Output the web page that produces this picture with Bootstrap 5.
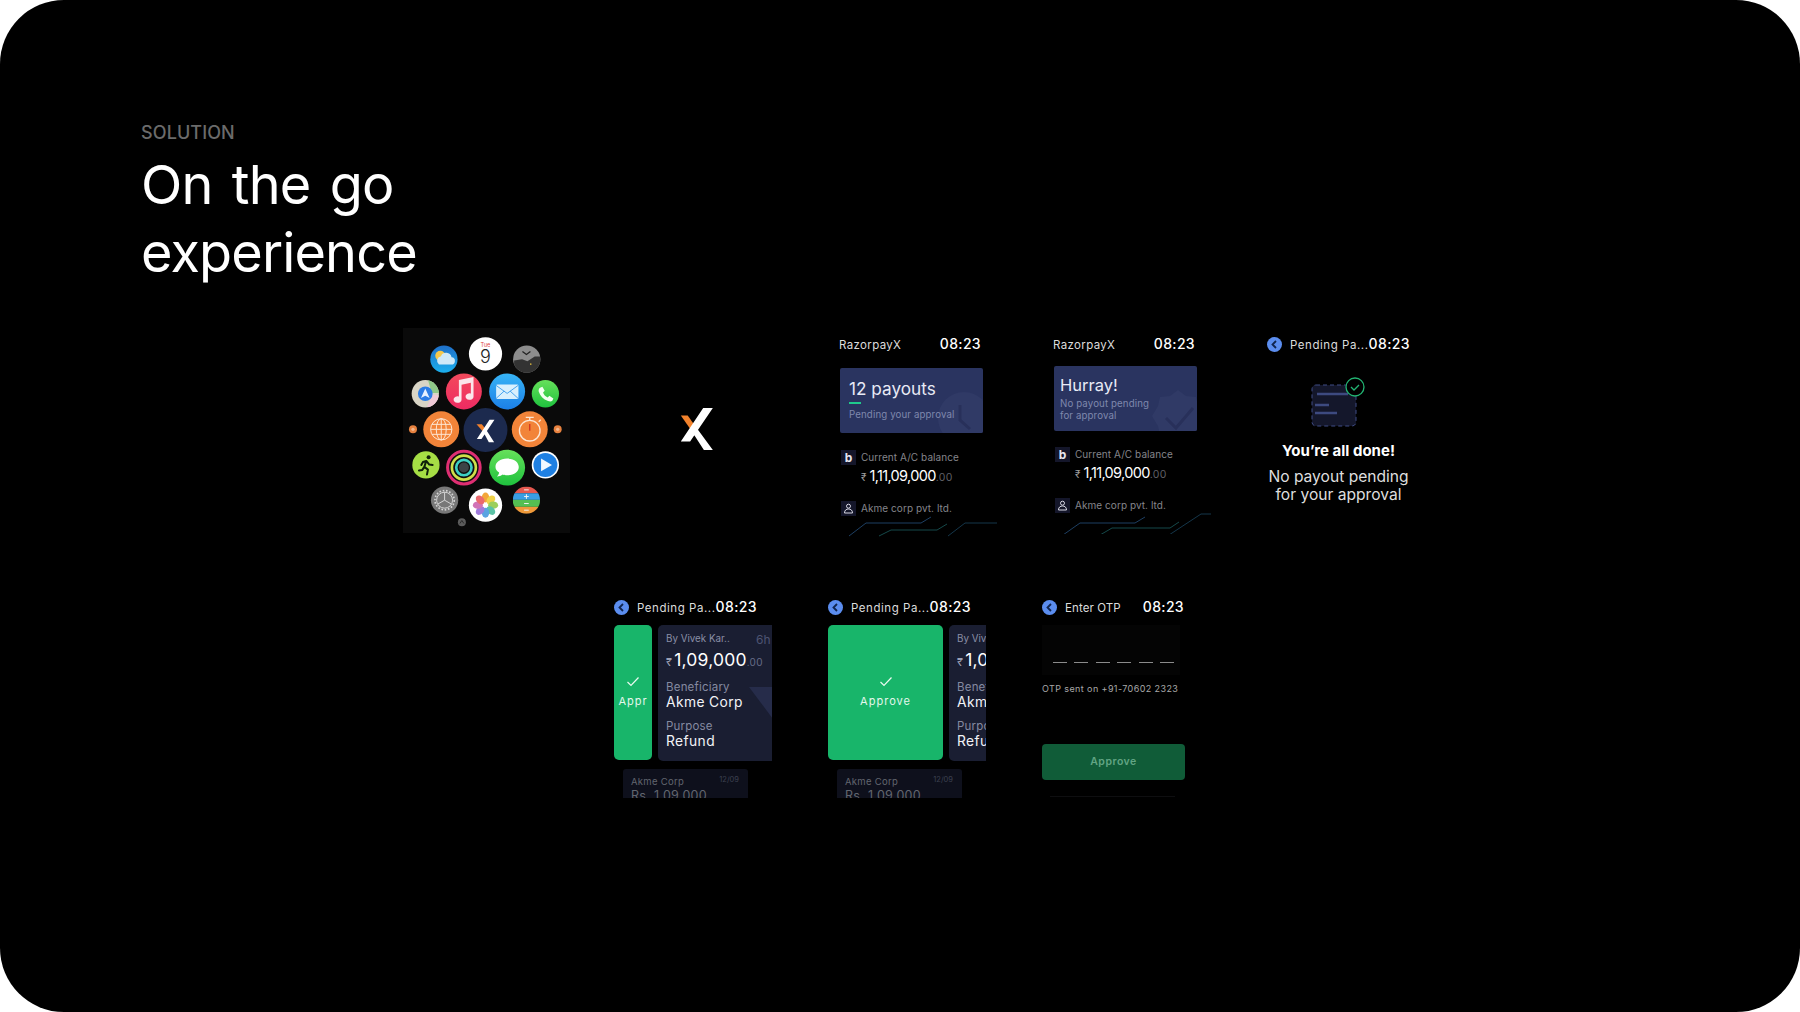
<!DOCTYPE html>
<html lang="en">
  <head>
    <meta charset="utf-8" />
    <title>Solution - On the go experience</title>
    <link href="https://cdn.jsdelivr.net/npm/bootstrap@5.3.0/dist/css/bootstrap.min.css" rel="stylesheet">
    <script src="https://cdn.jsdelivr.net/npm/bootstrap@5.3.0/dist/js/bootstrap.bundle.min.js"></script>
    <meta name="viewport" content="width=device-width, initial-scale=1">
    <style>
      html, body { height: 100%; }
      body { background: #fff; font-family: Inter, "Liberation Sans", sans-serif; overflow: hidden; }
      .slide { width: 1800px; height: 1012px; background: #000; border-radius: 64px; padding: 122px 0 0 141px; overflow: hidden; color: #fff; }

      /* title block */
      .kicker { font-size: 18px; line-height: 22px; color: #6b6b6b; font-weight: 500; letter-spacing: .1px; }
      .headline { font-family: Inter, sans-serif; font-size: 54px; line-height: 68px; font-weight: 400; margin: 7px 0 0; letter-spacing: -.85px; word-spacing: 5px; }

      /* two rows of watch screens */
      .row-one { margin: 41px 0 0 262px; }
      .row-two { margin: 54px 0 0 473px; }
      .apps { width: 167px; height: 205px; background: #0a0a0a; flex: none; }
      .apps svg { display: block; }
      .logo-x { width: 34px; height: 42px; margin: 80px 125px 0 110px; flex: none; }
      .watch { width: 170px; margin-right: 44px; padding-top: 6px; flex: none; }
      .watch-head { width: 142px; height: 20px; }
      .watch-title { font-size: 11.5px; line-height: 16px; letter-spacing: .55px; color: #dcdcdc; white-space: nowrap; margin-top: 2px; }
      .title-brand { letter-spacing: .35px; }
      .title-otp { letter-spacing: .1px; }
      .watch-time { font-size: 14px; line-height: 20px; letter-spacing: .35px; margin-left: auto; font-weight: 500; }
      .back-dot { width: 15px; height: 15px; border-radius: 50%; background: #5b8def; margin-right: 8px; flex: none; }
      .back-dot svg { display: block; }

      /* home screens */
      .hero { width: 143px; height: 65px; margin: 14px 0 0 1px; background: #2a3460; border-radius: 2px; padding: 9px 9px; position: relative; overflow: hidden; }
      .hero-up { margin-top: 12px; padding: 7px 6px; }
      .hero-mark { position: absolute; right: -7px; bottom: -11px; width: 52px; height: 52px; }
      .hero-big { font-size: 17.2px; line-height: 24px; color: #e8eaf5; white-space: nowrap; position: relative; }
      .hero-up .hero-big { font-size: 16.5px; margin-bottom: 1px; }
      .hero-bar { width: 12px; height: 2px; background: #1fc98c; margin: 1px 0 5px; position: relative; }
      .hero-sub { font-size: 9.7px; line-height: 12px; letter-spacing: .12px; color: #7f88ad; position: relative; white-space: nowrap; }
      .info-row { margin: 17px 0 0 2px; height: 15px; font-size: 10px; letter-spacing: .06px; color: #85858b; white-space: nowrap; }
      .hero-up + .info-row { margin-top: 16px; }
      .amount + .info-row { margin-top: 14px; }
      .info-box { width: 15px; height: 15px; background: #14162a; color: #e6e6ee; font-weight: 700; font-size: 12px; margin-right: 5px; flex: none; }
      .amount { margin: 0 0 0 22px; height: 22px; font-size: 14.5px; line-height: 22px; letter-spacing: -.65px; white-space: nowrap; }
      .amount-sym { font-size: 10px; color: #999; margin-right: 3px; letter-spacing: 0; }
      .amount-tail { font-size: 10.5px; color: #5f5f65; letter-spacing: .3px; }
      .trace { display: block; margin: -3px 0 0 0; }

      /* all done */
      .done-pic { display: block; margin: 19px 0 0 34px; }
      .done-title { width: 143px; text-align: center; font-weight: 700; font-size: 15px; line-height: 18px; margin-top: 15px; white-space: nowrap; }
      .done-text { width: 143px; text-align: center; font-size: 15.6px; line-height: 17.5px; color: #dedede; margin-top: 8px; white-space: nowrap; }

      /* swipe to approve */
      .swipe { width: 158px; height: 136px; margin-top: 8px; overflow: hidden; gap: 6px; }
      .swipe-go { background: #18b56a; border-radius: 5px; height: 135px; flex: none; overflow: hidden; font-size: 11px; letter-spacing: 1px; color: #e4f7ec; white-space: nowrap; }
      .swipe-go svg { margin-bottom: 6px; flex: none; }
      .swipe-thin { width: 38px; }
      .swipe-wide { width: 115px; }
      .pay-card { width: 150px; height: 136px; flex: none; background: #1a1e32; border-radius: 5px; padding: 7px 8px; position: relative; }
      .pay-top { height: 14px; font-size: 9.8px; color: #8a8fa6; white-space: nowrap; }
      .pay-age { position: absolute; left: 98px; top: 6px; font-size: 12px; color: #4e5472; }
      .pay-amount { font-size: 17.5px; line-height: 22px; margin-top: 3px; letter-spacing: .2px; white-space: nowrap; }
      .pay-sym { font-size: 11px; color: #9a9fb3; margin-right: 2px; }
      .pay-tail { font-size: 10px; color: #666c88; letter-spacing: .3px; }
      .pay-key { font-size: 11.5px; line-height: 14px; color: #858aa1; margin-top: 7px; letter-spacing: .2px; }
      .pay-val + .pay-key { margin-top: 8px; }
      .pay-val { font-size: 13.8px; line-height: 17px; letter-spacing: .4px; color: #f2f3f7; white-space: nowrap; }
      .pay-fold { position: absolute; left: 91px; top: 62px; }
      .next-card { width: 125px; height: 29px; margin: 8px 0 0 9px; background: #0e101c; border-radius: 3px 3px 0 0; padding: 7px 8px 0; overflow: hidden; position: relative; }
      .next-name { font-size: 9.5px; line-height: 12px; letter-spacing: .3px; color: #62666f; }
      .next-date { position: absolute; right: 9px; top: 5px; font-size: 7.5px; color: #3d4150; }
      .next-sum { font-size: 12.5px; line-height: 16px; letter-spacing: .3px; color: #62666f; white-space: nowrap; }

      /* otp */
      .otp-well { width: 138px; height: 50px; margin: 8px 0 0 0; background: #040404; padding: 37px 0 0 11px; gap: 7.4px; }
      .otp-dash { width: 14px; height: 1px; background: #8b8b8b; flex: none; }
      .otp-note { font-size: 9px; line-height: 12px; letter-spacing: .4px; color: #a8a8a8; margin-top: 8px; white-space: nowrap; }
      .otp-go { width: 143px; height: 36px; margin-top: 49px; background: #105c38; color: #62a584; border-radius: 4px; font-size: 10.5px; font-weight: 600; letter-spacing: .5px; }
      .otp-rule { width: 125px; height: 1px; margin: 16px 0 0 8px; background: #0e0e10; }
    </style>
  </head>
  <body>
    <div class="slide">
      <div class="kicker">SOLUTION</div>
      <h1 class="headline">On the go<br>experience</h1>

      <div class="d-flex row-one">
        <!-- watch home grid, numbers follow a 3x crop of the panel -->
        <div class="apps">
          <svg width="167" height="205" viewBox="38 25 502 615" xmlns="http://www.w3.org/2000/svg">
            <defs>
              <linearGradient id="skyFill" x1="0" y1="0" x2="0" y2="1"><stop offset="0" stop-color="#1f6fc9"/><stop offset="1" stop-color="#1bb0ee"/></linearGradient>
              <linearGradient id="mailFill" x1="0" y1="0" x2="0" y2="1"><stop offset="0" stop-color="#37b4f6"/><stop offset="1" stop-color="#1c7fe6"/></linearGradient>
              <linearGradient id="greenFill" x1="0" y1="0" x2="0" y2="1"><stop offset="0" stop-color="#66e05a"/><stop offset="1" stop-color="#1fc23e"/></linearGradient>
              <linearGradient id="musicFill" x1="0" y1="0" x2="0" y2="1"><stop offset="0" stop-color="#f34a5c"/><stop offset="1" stop-color="#ee2b62"/></linearGradient>
              <clipPath id="clipClock"><circle cx="410" cy="118" r="41"/></clipPath>
              <clipPath id="clipMaps"><circle cx="105" cy="222" r="41"/></clipPath>
              <clipPath id="clipStack"><circle cx="409" cy="542" r="41"/></clipPath>
            </defs>

            <circle cx="161" cy="118" r="41" fill="url(#skyFill)"/>
            <circle cx="150" cy="108" r="15" fill="#f5c84c"/>
            <path d="M146 134h36a11 11 0 0 0 2-22 17 17 0 0 0-32-3 14 14 0 0 0-6 25z" fill="#cfe9f8"/>

            <circle cx="286" cy="102" r="50" fill="#fff"/>
            <text x="286" y="82" text-anchor="middle" font-family="Inter, sans-serif" font-size="17" fill="#e2453c">Tue</text>
            <text x="286" y="131" text-anchor="middle" font-family="Inter, sans-serif" font-size="54" font-weight="300" fill="#222">9</text>

            <circle cx="410" cy="118" r="41" fill="#8d8d8d"/>
            <g clip-path="url(#clipClock)">
              <path d="M372 122l24-4 16 6 22-14h20v50h-82z" fill="#333"/>
              <circle cx="422" cy="133" r="2.5" fill="#d8b53c"/>
              <path d="M397 95l12 9 12-9" fill="none" stroke="#222" stroke-width="4"/>
            </g>

            <circle cx="105" cy="222" r="41" fill="#d9d5c6"/>
            <g clip-path="url(#clipMaps)">
              <path d="M112 176h40v44h-28z" fill="#8fc888"/>
              <path d="M110 262h40v-34l-24-4z" fill="#efc9d6"/>
            </g>
            <circle cx="105" cy="222" r="22" fill="#2b7de6"/>
            <path d="M105 206l13 29-13-7-13 7z" fill="#e6f1ff"/>

            <circle cx="221" cy="215" r="54" fill="url(#musicFill)"/>
            <path d="M206 181l44-9v58a12 10 0 1 1-8-9v-32l-28 6v44a12 10 0 1 1-8-9z" fill="#fbe6ea"/>

            <circle cx="351" cy="215" r="54" fill="url(#mailFill)"/>
            <rect x="318" y="194" width="67" height="44" rx="4" fill="#d9f0fd"/>
            <path d="M318 197l33 24 33-24M318 236l24-22M384 236l-24-22" fill="none" stroke="#2a95ec" stroke-width="2.5"/>

            <circle cx="466" cy="222" r="41" fill="url(#greenFill)"/>
            <path d="M450 204l7-3 7 12-5 5c2 7 7 12 14 15l5-5 12 8-3 7c-3 3-8 3-13 1-15-6-24-16-28-29-1-5 1-9 4-11z" fill="#f4fff2"/>

            <circle cx="68" cy="329" r="12" fill="#e8823f"/>
            <circle cx="68" cy="329" r="5" fill="#f4b78d"/>
            <circle cx="503" cy="329" r="12" fill="#e8823f"/>
            <circle cx="503" cy="329" r="5" fill="#f4b78d"/>

            <circle cx="153" cy="329" r="54" fill="#f28439"/>
            <g fill="none" stroke="#fde6d3" stroke-width="3">
              <circle cx="153" cy="329" r="32"/>
              <ellipse cx="153" cy="329" rx="15" ry="32"/>
              <path d="M153 297v64M121 329h64M125 314h56M125 344h56"/>
            </g>

            <circle cx="286" cy="331" r="66" fill="#1c2a4e"/>
            <path d="M259 314h16l12 15-7 9z" fill="#f2822c"/>
            <path d="M298 300h15l-39 58h-14zM287 329l25 39h-16l-16-30z" fill="#fff"/>

            <circle cx="419" cy="329" r="54" fill="#f28439"/>
            <circle cx="419" cy="333" r="31" fill="none" stroke="#fde6d3" stroke-width="4"/>
            <path d="M419 302v-10M407 293h24M446 306l6-6" stroke="#fde6d3" stroke-width="4" fill="none"/>
            <path d="M419 333v-20" stroke="#d3341f" stroke-width="4"/>

            <circle cx="107" cy="436" r="41" fill="#a6de45"/>
            <g fill="none" stroke="#10210a" stroke-width="6" stroke-linecap="round" stroke-linejoin="round">
              <path d="M108 424l-6 18 11 8-3 15M102 442l-6 9-10 2M108 424l-10 3-5 9M108 424l9 11 10 1"/>
            </g>
            <circle cx="115" cy="413" r="6" fill="#10210a"/>

            <circle cx="221" cy="444" r="54" fill="#111"/>
            <g fill="none">
              <circle cx="221" cy="444" r="49" stroke="#df2e72" stroke-width="9"/>
              <circle cx="221" cy="444" r="36" stroke="#cfe04a" stroke-width="8"/>
              <circle cx="221" cy="444" r="23" stroke="#3ed0c4" stroke-width="8"/>
            </g>
            <circle cx="221" cy="444" r="15" fill="#3c4346"/>

            <circle cx="351" cy="444" r="54" fill="url(#greenFill)"/>
            <path d="M351 417c22 0 35 11 35 25s-14 25-35 25c-5 0-9 0-13-2-5 4-11 6-18 6 4-3 6-7 7-12-6-4-11-10-11-17 0-14 14-25 35-25z" fill="#fff"/>

            <circle cx="466" cy="436" r="41" fill="#fff"/>
            <circle cx="466" cy="436" r="36" fill="#1f80e2"/>
            <path d="M453 417l33 19-33 19z" fill="#f2f8ff"/>

            <circle cx="163" cy="542" r="41" fill="#787878"/>
            <circle cx="163" cy="542" r="24" fill="none" stroke="#d4d4d4" stroke-width="3"/>
            <circle cx="163" cy="542" r="29" fill="none" stroke="#d4d4d4" stroke-width="5" stroke-dasharray="5 5"/>
            <path d="M163 542v-24M163 542l-21 12M163 542l21 12" stroke="#d4d4d4" stroke-width="3"/>

            <circle cx="286" cy="557" r="50" fill="#fff"/>
            <g>
              <ellipse cx="286" cy="534" rx="11" ry="15" fill="#f3a63a"/>
              <ellipse cx="302" cy="541" rx="11" ry="15" transform="rotate(45 302 541)" fill="#efd24a"/>
              <ellipse cx="309" cy="557" rx="15" ry="11" fill="#9ccf5c"/>
              <ellipse cx="302" cy="573" rx="11" ry="15" transform="rotate(-45 302 573)" fill="#5bc2a5"/>
              <ellipse cx="286" cy="580" rx="11" ry="15" fill="#5aa4e2"/>
              <ellipse cx="270" cy="573" rx="11" ry="15" transform="rotate(45 270 573)" fill="#a07bdc"/>
              <ellipse cx="263" cy="557" rx="15" ry="11" fill="#d173b6"/>
              <ellipse cx="270" cy="541" rx="11" ry="15" transform="rotate(-45 270 541)" fill="#ea6a6f"/>
            </g>

            <g clip-path="url(#clipStack)">
              <rect x="368" y="501" width="82" height="20" fill="#e6584f"/>
              <rect x="368" y="521" width="82" height="20" fill="#3a9ee4"/>
              <rect x="368" y="541" width="82" height="21" fill="#55bf52"/>
              <rect x="368" y="562" width="82" height="21" fill="#f09a3a"/>
              <path d="M402 511h14M402 531h14M409 524v14M402 552h14M402 572h14" stroke="#f2f2f2" stroke-width="3"/>
            </g>

            <circle cx="215" cy="608" r="12" fill="#5c5c5c"/>
            <path d="M209 612l6-9 6 9" fill="none" stroke="#222" stroke-width="2.5"/>
          </svg>
        </div>

        <svg class="logo-x" viewBox="65 55 94 122" xmlns="http://www.w3.org/2000/svg">
          <path d="M65 77h20l18 25-11 13z" fill="#f2822c"/>
          <path d="M130 55h28l-66 97H65zM103 102l55 75h-26l-40-62z" fill="#fff"/>
        </svg>

        <div class="watch">
          <div class="d-flex align-items-center watch-head"><span class="watch-title title-brand">RazorpayX</span><span class="watch-time">08:23</span></div>
          <div class="hero">
            <svg class="hero-mark" viewBox="0 0 52 52" xmlns="http://www.w3.org/2000/svg">
              <circle cx="26" cy="26" r="26" fill="#303a66"/>
              <path d="M22 13v15l10 9" fill="none" stroke="#28305a" stroke-width="3"/>
            </svg>
            <div class="hero-big">12 payouts</div>
            <div class="hero-bar"></div>
            <div class="hero-sub">Pending your approval</div>
          </div>
          <div class="d-flex align-items-center info-row">
            <span class="d-flex align-items-center justify-content-center info-box">b</span>Current A/C balance
          </div>
          <div class="amount"><span class="amount-sym">₹</span>1,11,09,000<span class="amount-tail">.00</span></div>
          <div class="d-flex align-items-center info-row">
            <span class="d-flex align-items-center justify-content-center info-box">
              <svg width="11" height="11" viewBox="0 0 11 11" xmlns="http://www.w3.org/2000/svg"><circle cx="5.5" cy="3.2" r="2" fill="none" stroke="#d8d8e4" stroke-width="1"/><path d="M1.5 10c0-3 2-4 4-4s4 1 4 4z" fill="none" stroke="#d8d8e4" stroke-width="1"/></svg>
            </span>Akme corp pvt. ltd.
          </div>
          <svg class="trace" width="170" height="24" viewBox="0 0 170 24" xmlns="http://www.w3.org/2000/svg" fill="none" stroke-width="1">
            <path d="M10 23L27 10h55l10-6" stroke="#1d3f63"/>
            <path d="M40 23l12-6h46l10-6" stroke="#15494a"/>
            <path d="M109 23l17-13h32" stroke="#14364a"/>
          </svg>
        </div>

        <div class="watch">
          <div class="d-flex align-items-center watch-head"><span class="watch-title title-brand">RazorpayX</span><span class="watch-time">08:23</span></div>
          <div class="hero hero-up">
            <svg class="hero-mark" viewBox="0 0 52 52" xmlns="http://www.w3.org/2000/svg">
              <path d="M26 0l8 6 10 1 2 9 6 10-6 10-2 9-10 1-8 6-8-6-10-1-2-9-6-10 6-10 2-9 10-1z" fill="#303a66"/>
              <path d="M14 28l10 10 17-20" fill="none" stroke="#28305a" stroke-width="3"/>
            </svg>
            <div class="hero-big">Hurray!</div>
            <div class="hero-sub">No payout pending<br>for approval</div>
          </div>
          <div class="d-flex align-items-center info-row">
            <span class="d-flex align-items-center justify-content-center info-box">b</span>Current A/C balance
          </div>
          <div class="amount"><span class="amount-sym">₹</span>1,11,09,000<span class="amount-tail">.00</span></div>
          <div class="d-flex align-items-center info-row">
            <span class="d-flex align-items-center justify-content-center info-box">
              <svg width="11" height="11" viewBox="0 0 11 11" xmlns="http://www.w3.org/2000/svg"><circle cx="5.5" cy="3.2" r="2" fill="none" stroke="#d8d8e4" stroke-width="1"/><path d="M1.5 10c0-3 2-4 4-4s4 1 4 4z" fill="none" stroke="#d8d8e4" stroke-width="1"/></svg>
            </span>Akme corp pvt. ltd.
          </div>
          <svg class="trace" width="170" height="24" viewBox="0 0 170 24" xmlns="http://www.w3.org/2000/svg" fill="none" stroke-width="1">
            <path d="M10 25L27 13h55l10-6" stroke="#1d3f63"/>
            <path d="M47 25l12-7h58l9-6" stroke="#15494a"/>
            <path d="M116 25l32-21h10" stroke="#14364a"/>
          </svg>
        </div>

        <div class="watch">
          <div class="d-flex align-items-center watch-head">
            <span class="back-dot"><svg width="15" height="15" viewBox="0 0 15 15" xmlns="http://www.w3.org/2000/svg"><path d="M9 4L5.5 7.5 9 11" fill="none" stroke="#10254f" stroke-width="1.8"/></svg></span>
            <span class="watch-title">Pending Pa...</span><span class="watch-time">08:23</span>
          </div>
          <svg class="done-pic" width="66" height="54" viewBox="0 0 66 54" xmlns="http://www.w3.org/2000/svg">
            <rect x="11" y="12" width="44" height="41" rx="4" fill="#14172b" stroke="#3f4c86" stroke-width="1" stroke-dasharray="4 3"/>
            <path d="M16 21h31M14 32h14M14 40h22" stroke="#3d4a80" stroke-width="2.5"/>
            <circle cx="54" cy="14" r="9" fill="#000" stroke="#22b573" stroke-width="1.3"/>
            <path d="M50 14l3 3 5-5" fill="none" stroke="#22b573" stroke-width="1.3"/>
          </svg>
          <div class="done-title">You’re all done!</div>
          <div class="done-text">No payout pending<br>for your approval</div>
        </div>
      </div>

      <div class="d-flex row-two">
        <div class="watch">
          <div class="d-flex align-items-center watch-head">
            <span class="back-dot"><svg width="15" height="15" viewBox="0 0 15 15" xmlns="http://www.w3.org/2000/svg"><path d="M9 4L5.5 7.5 9 11" fill="none" stroke="#10254f" stroke-width="1.8"/></svg></span>
            <span class="watch-title">Pending Pa...</span><span class="watch-time">08:23</span>
          </div>
          <div class="d-flex swipe">
            <div class="d-flex flex-column align-items-center justify-content-center swipe-go swipe-thin">
              <svg width="14" height="11" viewBox="0 0 14 11" xmlns="http://www.w3.org/2000/svg"><path d="M1.5 6l3.5 3.5 7.5-8" fill="none" stroke="#eafaf0" stroke-width="1.2"/></svg>
              Appr
            </div>
            <div class="pay-card">
              <div class="pay-top">By Vivek Kar..</div>
              <div class="pay-age">6h</div>
              <div class="pay-amount"><span class="pay-sym">₹</span>1,09,000<span class="pay-tail">.00</span></div>
              <svg class="pay-fold" width="24" height="32" viewBox="0 0 24 32" xmlns="http://www.w3.org/2000/svg"><path d="M0 0h24v32z" fill="#262c4a"/></svg>
              <div class="pay-key">Beneficiary</div>
              <div class="pay-val">Akme Corp</div>
              <div class="pay-key">Purpose</div>
              <div class="pay-val">Refund</div>
            </div>
          </div>
          <div class="next-card">
            <div class="next-date">12/09</div>
            <div class="next-name">Akme Corp</div>
            <div class="next-sum">Rs. 1,09,000</div>
          </div>
        </div>

        <div class="watch">
          <div class="d-flex align-items-center watch-head">
            <span class="back-dot"><svg width="15" height="15" viewBox="0 0 15 15" xmlns="http://www.w3.org/2000/svg"><path d="M9 4L5.5 7.5 9 11" fill="none" stroke="#10254f" stroke-width="1.8"/></svg></span>
            <span class="watch-title">Pending Pa...</span><span class="watch-time">08:23</span>
          </div>
          <div class="d-flex swipe">
            <div class="d-flex flex-column align-items-center justify-content-center swipe-go swipe-wide">
              <svg width="14" height="11" viewBox="0 0 14 11" xmlns="http://www.w3.org/2000/svg"><path d="M1.5 6l3.5 3.5 7.5-8" fill="none" stroke="#eafaf0" stroke-width="1.2"/></svg>
              Approve
            </div>
            <div class="pay-card">
              <div class="pay-top">By Vivek Kar..</div>
              <div class="pay-age">6h</div>
              <div class="pay-amount"><span class="pay-sym">₹</span>1,09,000<span class="pay-tail">.00</span></div>
              <div class="pay-key">Beneficiary</div>
              <div class="pay-val">Akme Corp</div>
              <div class="pay-key">Purpose</div>
              <div class="pay-val">Refund</div>
            </div>
          </div>
          <div class="next-card">
            <div class="next-date">12/09</div>
            <div class="next-name">Akme Corp</div>
            <div class="next-sum">Rs. 1,09,000</div>
          </div>
        </div>

        <div class="watch">
          <div class="d-flex align-items-center watch-head">
            <span class="back-dot"><svg width="15" height="15" viewBox="0 0 15 15" xmlns="http://www.w3.org/2000/svg"><path d="M9 4L5.5 7.5 9 11" fill="none" stroke="#10254f" stroke-width="1.8"/></svg></span>
            <span class="watch-title title-otp">Enter OTP</span><span class="watch-time">08:23</span>
          </div>
          <div class="d-flex otp-well">
            <span class="otp-dash"></span><span class="otp-dash"></span><span class="otp-dash"></span><span class="otp-dash"></span><span class="otp-dash"></span><span class="otp-dash"></span>
          </div>
          <div class="otp-note">OTP sent on +91-70602 2323</div>
          <div class="d-flex align-items-center justify-content-center otp-go">Approve</div>
          <div class="otp-rule"></div>
        </div>
      </div>
    </div>
  </body>
</html>
